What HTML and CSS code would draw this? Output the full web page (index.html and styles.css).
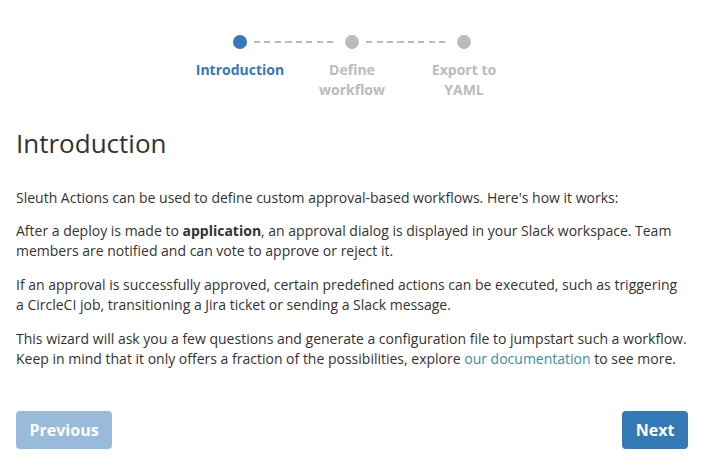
FILE: index.html
```html
<!DOCTYPE html>
<html>
<head>
<meta charset="utf-8">
<link rel="stylesheet" href="styles.css">
</head>
<body>
<div class="page">
  <div class="stepper">
    <div class="dots">
      <span class="dot active"></span>
      <span class="line"></span>
      <span class="dot"></span>
      <span class="line"></span>
      <span class="dot"></span>
    </div>
    <div class="labels">
      <div class="label active">Introduction</div>
      <div class="label">Define<br>workflow</div>
      <div class="label">Export to<br>YAML</div>
    </div>
  </div>
  <h2 class="title">Introduction</h2>
  <div class="content">
    <p class="first">Sleuth Actions can be used to define custom approval-based workflows. Here's how it works:</p>
    <p>After a deploy is made to <strong>application</strong>, an approval dialog is displayed in your Slack workspace. Team members are notified and can vote to approve or reject it.</p>
    <p>If an approval is successfully approved, certain predefined actions can be executed, such as triggering a CircleCI job, transitioning a Jira ticket or sending a Slack message.</p>
    <p>This wizard will ask you a few questions and generate a configuration file to jumpstart such a workflow. Keep in mind that it only offers a fraction of the possibilities, explore <a href="#" class="link">our documentation</a> to see more.</p>
  </div>
  <div class="actions">
    <button class="btn disabled">Previous</button>
    <button class="btn">Next</button>
  </div>
</div>
</body>
</html>
```
FILE: styles.css
```css
* { box-sizing: border-box; }
body {
  margin: 0;
  font-family: "Open Sans", sans-serif;
  font-size: 14px;
  line-height: 20px;
  color: #333;
  background: #fff;
}
.page {
  padding: 34px 17px 0 16px;
}
.stepper {
  width: 336px;
  margin: 0 auto;
}
.dots {
  display: flex;
  align-items: center;
  height: 16px;
  padding: 0 49px;
}
.dot {
  width: 14px;
  height: 14px;
  border-radius: 50%;
  background: #bbb;
  flex: none;
}
.dot.active { background: #337ab7; }
.line {
  flex: 1;
  height: 2px;
  margin: 0 7px;
  background: repeating-linear-gradient(to right, #bbb 0 6px, transparent 6px 10.5px);
}
.labels {
  display: grid;
  grid-template-columns: repeat(3, 1fr);
  margin-top: 10px;
}
.label {
  font-weight: 700;
  text-align: center;
  color: #bbb;
}
.label.active { color: #337ab7; }
.title {
  font-size: 26px;
  font-weight: 400;
  line-height: 34px;
  margin: 26px 0 28px;
}
.content { padding-right: 1px; }
p { margin: 0 0 14px; }
p.first { margin-bottom: 13px; }
strong { font-weight: 700; }
.link { color: #3a8fa0; text-decoration: none; }
.actions {
  display: flex;
  justify-content: space-between;
  margin-top: 42px;
}
.btn {
  font-family: "Open Sans", sans-serif;
  font-size: 16px;
  font-weight: 700;
  color: #fff;
  background: #337ab7;
  border: none;
  border-radius: 4px;
  height: 38px;
  padding: 0 13.5px;
}
.btn.disabled { opacity: 0.5; }
```
